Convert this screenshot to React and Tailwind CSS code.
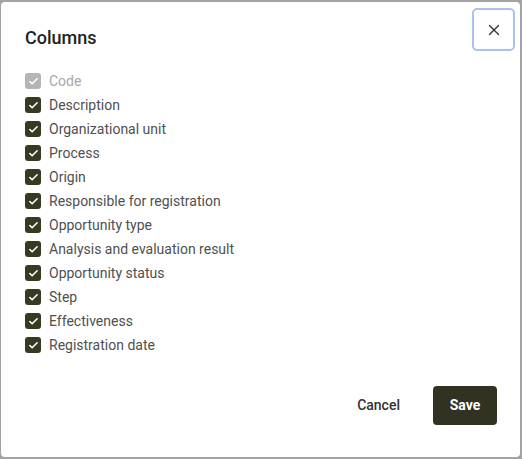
import React from "react";
import { X, Check } from "lucide-react";

const cols = [
  "Description",
  "Organizational unit",
  "Process",
  "Origin",
  "Responsible for registration",
  "Opportunity type",
  "Analysis and evaluation result",
  "Opportunity status",
  "Step",
  "Effectiveness",
  "Registration date",
];

function Box({ disabled }) {
  return (
    <span
      className={`w-4 h-4 rounded-[3px] flex items-center justify-center ${
        disabled ? "bg-[#b5b5b5]" : "bg-[#343b22]"
      }`}
    >
      <Check size={11} strokeWidth={3.5} className="text-white" />
    </span>
  );
}

export default function App() {
  return (
    <div
      className="w-[522px] h-[459px] bg-[#a3a3a3] pt-[2px] pl-[1px] pr-[2px] pb-[2px]"
      style={{ fontFamily: "Roboto, 'Liberation Sans', sans-serif" }}
    >
      <div className="w-full h-full bg-white rounded-[4px] flex flex-col">
        <div className="flex items-start justify-between pl-6 pr-[5px] pt-[6px]">
          <h2 className="text-[18px] font-medium text-[#212121] mt-[19px] leading-[22px]">Columns</h2>
          <button className="w-[43px] h-[43px] border-2 border-[#a9c3ee] rounded-[5px] flex items-center justify-center text-[#333]">
            <X size={18} strokeWidth={1.8} />
          </button>
        </div>
        <div className="flex flex-col pl-6 mt-[18px]">
          <label className="flex items-center gap-2 h-6 text-[14px] text-[#a8a8a8]">
            <Box disabled />
            Code
          </label>
          {cols.map((c) => (
            <label key={c} className="flex items-center gap-2 h-6 text-[14px] text-[#505050]">
              <Box />
              {c}
            </label>
          ))}
        </div>
        <div className="flex-1" />
        <div className="flex justify-end items-center gap-[13px] pr-[23px] pb-[32px]">
          <button className="px-5 h-[39px] text-[14px] font-medium text-[#333]">Cancel</button>
          <button className="w-[64px] h-[39px] rounded-[4px] bg-[#313222] text-white text-[14px] font-bold">Save</button>
        </div>
      </div>
    </div>
  );
}
